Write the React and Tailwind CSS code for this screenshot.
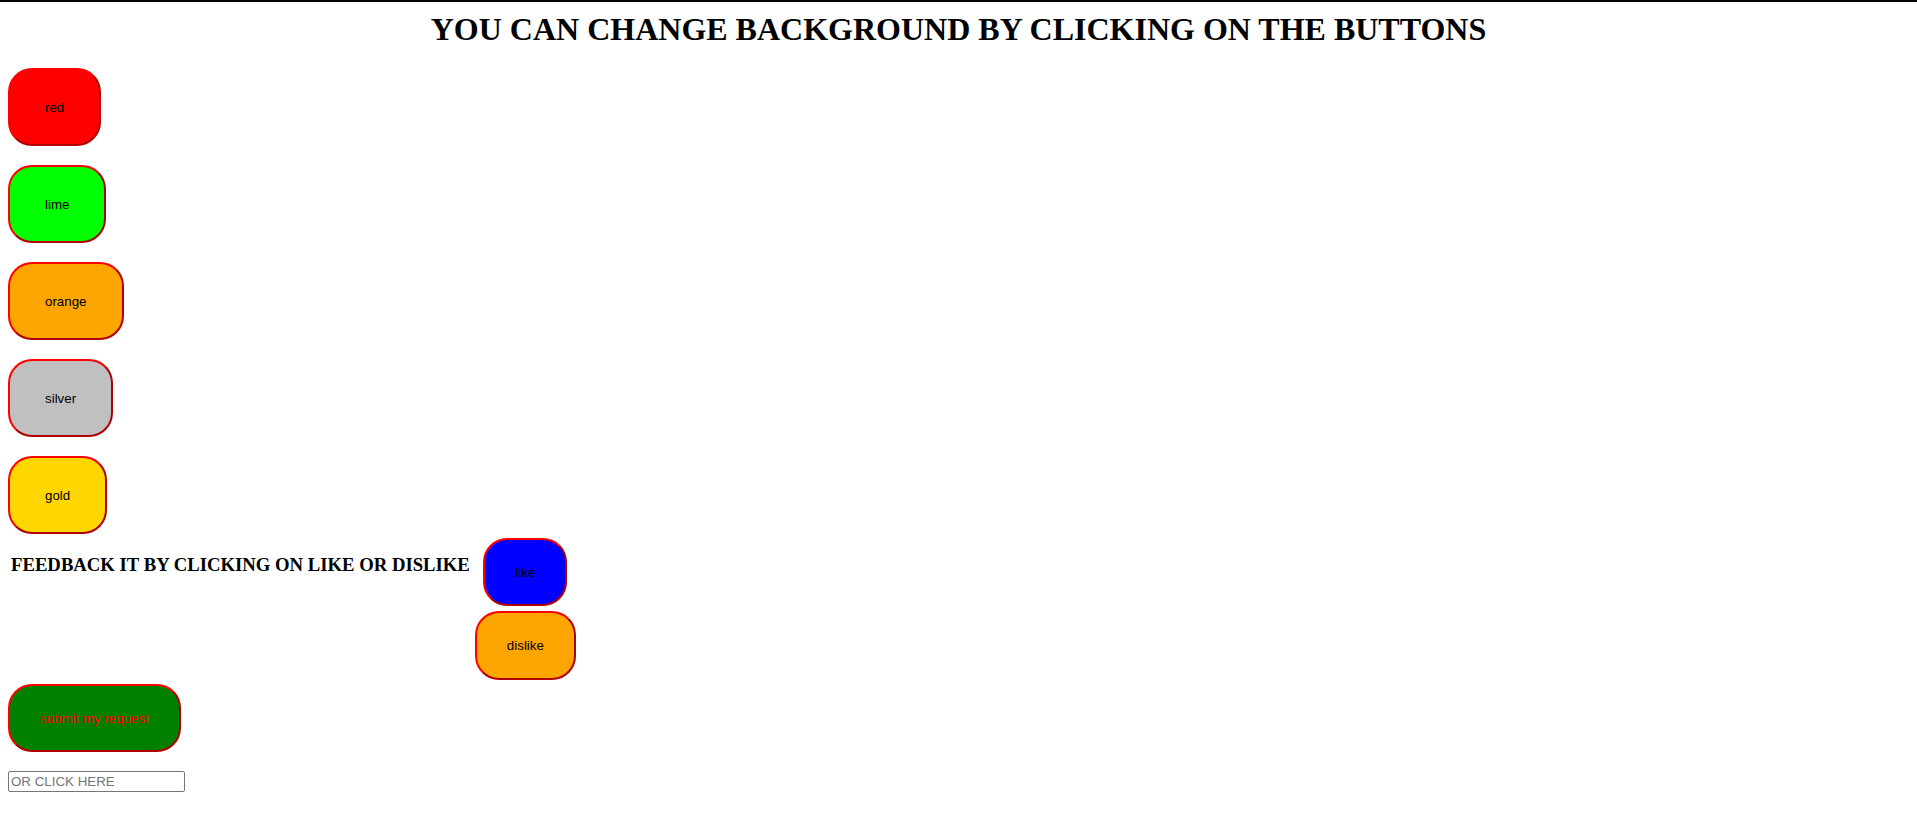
import { useState } from "react";

const colors = [
  { name: "red", bg: "bg-[#ff0000]" },
  { name: "lime", bg: "bg-[#00ff00]" },
  { name: "orange", bg: "bg-[#ffa500]" },
  { name: "silver", bg: "bg-[#c0c0c0]" },
  { name: "gold", bg: "bg-[#ffd700]" },
];

const btn =
  "block rounded-[24px] border-2 border-[#ff0000] border-r-[#b00000] border-b-[#b00000] text-black text-[13.333px] leading-[15px] font-['Liberation_Sans',Arial,sans-serif] cursor-pointer";

function App() {
  const [bg, setBg] = useState("white");

  return (
    <div className="min-h-[828px] border-t-2 border-black" style={{ backgroundColor: bg }}>
      <div className="px-2 pt-[10px] font-['Liberation_Serif','Times_New_Roman',serif]">
        <h1 className="text-center text-[32px] font-bold leading-[35px] mb-[21px]">
          YOU CAN CHANGE BACKGROUND BY CLICKING ON THE BUTTONS
        </h1>

        {/* colour buttons */}
        <div className="flex flex-col items-start gap-[19px]">
          {colors.map((c) => (
            <button
              key={c.name}
              onClick={() => setBg(c.name)}
              className={`${btn} ${c.bg} h-[78px] px-[35px]`}
            >
              {c.name}
            </button>
          ))}
        </div>

        {/* feedback */}
        <div className="flex items-start gap-[5px] mt-[4px]">
          <h3 className="ml-[3px] text-[18.72px] font-bold leading-[21px] mt-[16px]">
            FEEDBACK IT BY CLICKING ON LIKE OR DISLIKE
          </h3>
          <div className="flex flex-col items-center gap-[5px]">
            <button className={`${btn} bg-[#0000ff] h-[68px] px-[30px]`}>like</button>
            <button className={`${btn} bg-[#ffa500] h-[69px] px-[30px]`}>dislike</button>
          </div>
        </div>

        <button
          className={`${btn} bg-[#008000] !text-[#ff0000] h-[68px] px-[30px] mt-[4px]`}
        >
          submit my request
        </button>

        <input
          type="text"
          placeholder="OR CLICK HERE"
          className="block mt-[19px] w-[177px] h-[21px] border border-[#767676] rounded-[2px] px-[2px] text-[13.333px] font-['Liberation_Sans',Arial,sans-serif] placeholder:text-[#757575] bg-white"
        />
      </div>
    </div>
  );
}

export default App;
